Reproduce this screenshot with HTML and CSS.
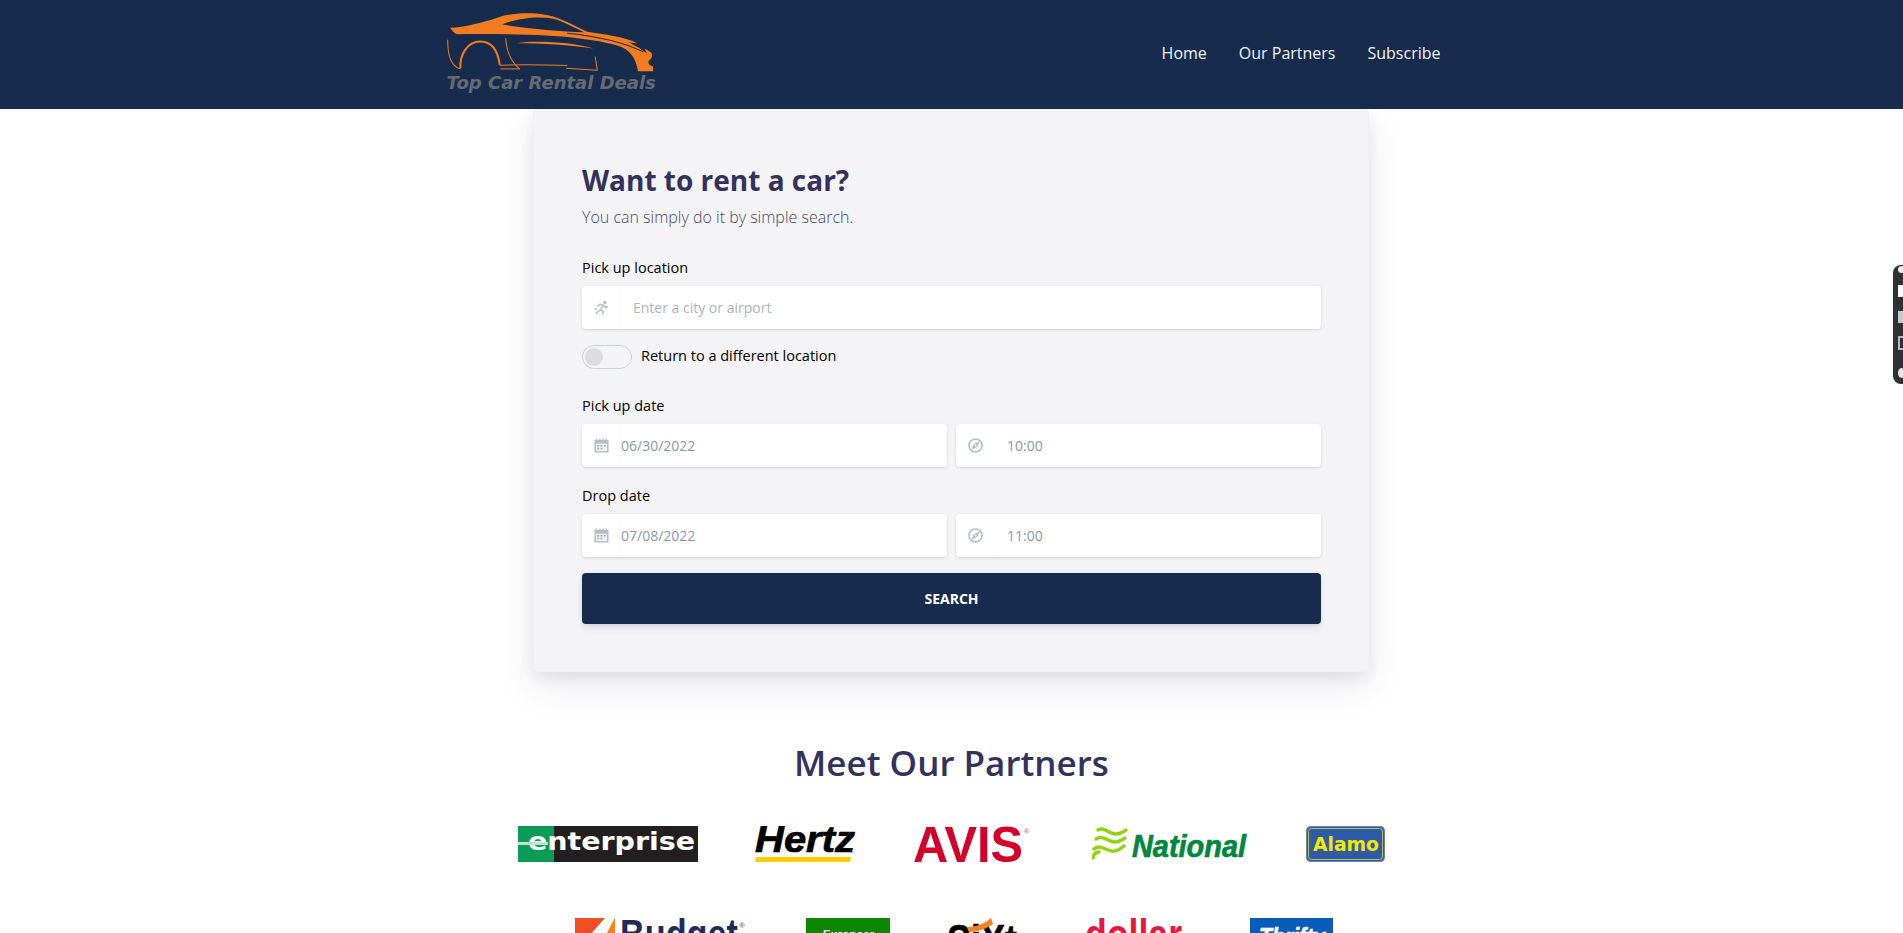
FILE: index.html
```html
<!DOCTYPE html>
<html>
<head>
  <title>Top Car Rental Deals</title>
  <link rel="stylesheet" href="styles.css">
</head>
<body>
  <div class="page">
    <header class="topbar">
      <div class="topbar-inner">
        <a class="brand" href="#">
          <svg class="brand-car" viewBox="80 40 620 176" aria-hidden="true">
            <path class="car-fill" fill-rule="evenodd" d="M90 84 C130 82 190 68 235 52 C285 36 370 36 420 58 C450 70 475 84 500 96 C550 104 610 110 650 130 L625 128 C650 140 665 150 678 160 L672 146 L692 158 C696 170 694 176 685 182 C680 188 685 196 697 200 L697 214 L652 214 C648 190 640 165 615 148 C590 132 530 122 470 115 C380 104 250 102 110 103 C100 100 94 92 90 84 Z M245 74 C280 58 360 44 410 60 C440 72 465 85 490 97 C420 95 320 86 245 74 Z"/>
            <path class="car-fill" d="M290 130 C340 122 450 125 518 146 C450 135 360 130 290 130 Z"/>
            <path class="car-slit" d="M440 100 C520 108 600 122 668 156"/>
            <path class="car-line" d="M120 206 C118 165 140 125 180 125 C215 125 232 150 238 195"/>
            <path class="car-thin" d="M82 120 C82 160 90 200 120 207"/>
            <path class="car-thin" d="M256 115 C258 150 270 185 298 208"/>
            <path class="car-thin" d="M238 196 C300 194 380 195 440 197"/>
            <path class="car-thin" d="M240 207 L298 207"/>
            <path class="car-thin" d="M437 205 L530 211 L524 170"/>
          </svg>
          <span class="brand-name">Top Car Rental Deals</span>
        </a>
        <nav class="main-nav">
          <a href="#">Home</a>
          <a href="#">Our Partners</a>
          <a href="#">Subscribe</a>
        </nav>
      </div>
    </header>

    <main>
      <section class="search-card">
        <h3 class="search-title">Want to rent a car?</h3>
        <p class="search-sub">You can simply do it by simple search.</p>

        <form>
          <label class="field-label">Pick up location</label>
          <div class="input-group">
            <span class="addon">
              <svg class="icon" viewBox="0 0 16 16"><circle class="ic-solid" cx="11.6" cy="2.6" r="1.8"/><path class="ic-line" d="M3.5 7 L6.5 4.5 L10 5.5 L6.8 10.5 L2 14.5 M6.8 10.5 L10 12.5 L9 15.5 M10 5.5 L12 8 L15 7 M0.5 9.5 L3 9.5"/></svg>
            </span>
            <input class="text-input wide" type="text" placeholder="Enter a city or airport">
          </div>

          <div class="toggle-row">
            <span class="toggle"><span class="toggle-knob"></span></span>
            <span class="toggle-text">Return to a different location</span>
          </div>

          <label class="field-label date-label">Pick up date</label>
          <div class="date-row">
            <div class="input-group">
              <span class="addon">
                <svg class="icon" viewBox="0 0 16 16"><use href="#cal"/></svg>
              </span>
              <input class="text-input" type="text" value="06/30/2022">
            </div>
            <div class="input-group">
              <span class="addon">
                <svg class="icon" viewBox="0 0 16 16"><use href="#compass"/></svg>
              </span>
              <input class="text-input wide" type="text" value="10:00">
            </div>
          </div>

          <label class="field-label drop-label">Drop date</label>
          <div class="date-row">
            <div class="input-group">
              <span class="addon">
                <svg class="icon" viewBox="0 0 16 16"><use href="#cal"/></svg>
              </span>
              <input class="text-input" type="text" value="07/08/2022">
            </div>
            <div class="input-group">
              <span class="addon">
                <svg class="icon" viewBox="0 0 16 16"><use href="#compass"/></svg>
              </span>
              <input class="text-input wide" type="text" value="11:00">
            </div>
          </div>

          <button class="search-btn" type="button">SEARCH</button>
        </form>
      </section>

      <section class="partners">
        <h2 class="partners-title">Meet Our Partners</h2>

        <div class="logo-row">
          <svg class="logo" width="180" height="36" viewBox="0 0 180 36">
            <rect width="180" height="36" fill="#231f20"/>
            <rect width="36" height="36" fill="#0a9c56"/>
            <text class="lg-wide" x="10" y="24" font-size="24" fill="#fff" textLength="167" lengthAdjust="spacingAndGlyphs">enterprise</text>
            <rect y="16" width="30" height="3" fill="#bfe3cd"/>
          </svg>
          <svg class="logo" width="101" height="36" viewBox="0 0 101 36">
            <text class="lg-bold-it heavy" x="0" y="26" font-size="36" fill="#000" stroke="#000" textLength="100" lengthAdjust="spacingAndGlyphs">Hertz</text>
            <polygon points="1,31 96,31 95,36 0,36" fill="#ffcc00"/>
            <text class="lg-bold" x="96" y="28" font-size="4" fill="#888">®</text>
          </svg>
          <svg class="logo" width="122" height="36" viewBox="0 0 122 36">
            <text class="lg-bold" x="0" y="36" font-size="50" fill="#d4002a" textLength="110" lengthAdjust="spacingAndGlyphs">AVIS</text>
            <text class="lg-bold" x="111" y="8" font-size="7" fill="#e0738a">®</text>
          </svg>
          <svg class="logo" width="157" height="36" viewBox="0 0 157 36">
            <path class="wave" d="M6 4 C12 0 18 9 24 8 C28 8 31 6 34 4"/>
            <path class="wave" d="M4 13 C11 8 17 17 23 16 C27 16 30 14 33 12"/>
            <path class="wave" d="M2 23 C9 17 16 27 22 25 C26 25 29 22 32 20"/>
            <path class="wave" d="M1 32 C2 27 5 26 7 26"/>
            <text class="lg-bold-it heavy" x="40" y="31" font-size="31" fill="#00873e" stroke="#00873e" textLength="114" lengthAdjust="spacingAndGlyphs">National</text>
          </svg>
          <svg class="logo" width="79" height="36" viewBox="0 0 79 36">
            <rect x="0.5" y="0.5" width="78" height="35" rx="4" fill="#2d5ba8" stroke="#5f86bb"/>
            <rect x="2.5" y="2.5" width="74" height="31" rx="3" fill="none" stroke="#b9c050"/>
            <text class="lg-wide" x="7" y="25" font-size="19" fill="#f5e800" textLength="66" lengthAdjust="spacingAndGlyphs">Alamo</text>
          </svg>
        </div>

        <div class="logo-row second">
          <svg class="logo" width="174" height="50" viewBox="0 0 174 50">
            <rect width="40" height="50" fill="#f04e23"/>
            <polygon points="40,0 30,0 0,34 0,50 14,50" fill="#fff"/>
            <polygon points="40,0 40,30 14,50" fill="#f58220"/>
            <text class="lg-bold" x="45" y="31" font-size="42" fill="#1f2a5e" textLength="118" lengthAdjust="spacingAndGlyphs">Budget</text>
            <text class="lg-bold" x="164" y="10" font-size="8" fill="#777">®</text>
          </svg>
          <svg class="logo" width="84" height="50" viewBox="0 0 84 50">
            <rect width="84" height="50" fill="#0c8500"/>
            <text class="lg-bold" x="17" y="20" font-size="11" fill="#fff" textLength="51">Europcar</text>
          </svg>
          <svg class="logo" width="81" height="50" viewBox="0 0 81 50">
            <text class="lg-bold heavy" x="0" y="38" font-size="44" fill="#000" stroke="#000" textLength="70" lengthAdjust="spacingAndGlyphs">SiXt</text>
            <path d="M20 9 C28 9 38 6 44 0 L46 6 C38 12 28 14 22 14 Z" fill="#f58220"/>
          </svg>
          <svg class="logo" width="108" height="50" viewBox="0 0 108 50">
            <text class="lg-bold" x="0" y="32" font-size="44" fill="#e8173f" textLength="97" lengthAdjust="spacingAndGlyphs">dollar</text>
          </svg>
          <svg class="logo" width="83" height="50" viewBox="0 0 83 50">
            <rect width="83" height="50" fill="#0a5cbb"/>
            <text class="lg-bold-it heavy" x="9" y="28" font-size="26" fill="#fff" stroke="#fff" textLength="66" lengthAdjust="spacingAndGlyphs">Thrifty</text>
          </svg>
        </div>
      </section>
    </main>

    <aside class="side-widget">
      <span class="sw-dot"></span>
      <span class="sw-box white"></span>
      <span class="sw-box grey"></span>
      <span class="sw-box outline"></span>
      <span class="sw-dot low"></span>
    </aside>
  </div>

  <svg class="defs" width="0" height="0">
    <symbol id="cal" viewBox="0 0 16 16">
      <rect x="0.5" y="2" width="15" height="13.5" fill="#b4bcc6"/>
      <path d="M3 0.5 v3 M6.3 0.5 v3 M9.7 0.5 v3 M13 0.5 v3" stroke="#b4bcc6" stroke-width="1.2"/>
      <rect x="2" y="6" width="12" height="8" fill="#eef0f3"/>
      <path d="M3.5 7.5 h2 v1.5 h-2 z M7 7.5 h2 v1.5 h-2 z M10.5 7.5 h2 v1.5 h-2 z M3.5 10.5 h2 v1.5 h-2 z M7 10.5 h2 v1.5 h-2 z" fill="#a3acb8"/>
    </symbol>
    <symbol id="compass" viewBox="0 0 16 16">
      <circle cx="8" cy="8" r="7" fill="none" stroke="#b4bcc6" stroke-width="1.6"/>
      <polygon points="12.5,3.5 9.6,9.6 3.5,12.5 6.4,6.4" fill="#b4bcc6"/>
      <circle cx="8" cy="8" r="1" fill="#fff"/>
    </symbol>
  </svg>
</body>
</html>
```

FILE: styles.css
```css
* {
  box-sizing: border-box;
}
body {
  margin: 0;
  font-family: "Open Sans", sans-serif;
  background-color: #fff;
  color: #000;
}
.page {
  position: relative;
  height: 100vh;
  overflow: hidden;
}
.defs {
  position: absolute;
}

/* header */
.topbar {
  position: relative;
  z-index: 2;
  height: 109px;
  background-color: #172b4d;
}
.topbar-inner {
  width: 1010px;
  height: 100%;
  margin: 0 auto;
  display: flex;
  align-items: center;
  justify-content: space-between;
}
.brand {
  display: block;
  text-decoration: none;
  padding-bottom: 3px;
}
.brand-car {
  display: block;
  width: 207px;
  height: 59px;
}
.car-fill {
  fill: #f47c20;
}
.car-slit {
  fill: none;
  stroke: #172b4d;
  stroke-width: 3;
}
.car-line,
.car-thin {
  fill: none;
  stroke: #f47c20;
}
.car-line {
  stroke-width: 6;
}
.car-thin {
  stroke-width: 3;
}
.brand-name {
  display: block;
  margin-top: 1px;
  font-family: "DejaVu Sans", sans-serif;
  font-size: 18px;
  line-height: 20px;
  font-weight: bold;
  font-style: italic;
  white-space: nowrap;
  color: #666b73;
}
.main-nav {
  display: flex;
  margin-bottom: 3px;
}
.main-nav a {
  padding: 0 16px;
  font-size: 16px;
  color: #f1f3f6;
  text-decoration: none;
}

/* search card */
.search-card {
  position: relative;
  width: 836px;
  margin-left: calc(50% - 418.5px);
  padding: 49px 47px 47px 48px;
  border: 1px solid #f0f0f3;
  border-radius: 4px;
  background-color: #f4f4f7;
  box-shadow: 0 15px 35px rgba(50, 50, 93, 0.1), 0 5px 15px rgba(0, 0, 0, 0.07);
}
.search-title {
  margin: 0;
  font-size: 28px;
  line-height: 42px;
  font-weight: 700;
  color: #32325d;
}
.search-sub {
  margin: 3px 0 0;
  font-size: 16px;
  line-height: 26px;
  font-weight: 300;
  color: #444b5e;
}
.field-label {
  display: block;
  margin-top: 27px;
  margin-bottom: 8px;
  font-size: 14.5px;
  line-height: 21px;
  font-weight: 500;
}
.date-label {
  margin-top: 26px;
}
.drop-label {
  margin-top: 18px;
}
.input-group {
  display: flex;
  flex: 1;
  height: 43px;
  border-radius: 4px;
  background-color: #fff;
  box-shadow: 0 1px 3px rgba(50, 50, 93, 0.15), 0 1px 0 rgba(0, 0, 0, 0.02);
}
.addon {
  flex: none;
  width: 38px;
  display: flex;
  align-items: center;
  padding-left: 12px;
}
.icon {
  width: 15px;
  height: 15px;
  display: block;
}
.ic-solid {
  fill: #b4bcc6;
}
.ic-line {
  fill: none;
  stroke: #b4bcc6;
  stroke-width: 1.6;
}
.text-input {
  flex: 1;
  min-width: 0;
  padding: 0;
  border: none;
  border-left: 1px solid #fdfdfd;
  border-radius: 0 4px 4px 0;
  outline: none;
  background: transparent;
  font-family: "Open Sans", sans-serif;
  font-size: 14px;
  color: #8898aa;
}
.text-input.wide {
  padding-left: 12px;
}
.text-input::placeholder {
  color: #adb5bd;
  opacity: 1;
}
.toggle-row {
  display: flex;
  align-items: center;
  gap: 9px;
  margin-top: 16px;
}
.toggle {
  display: block;
  flex: none;
  width: 50px;
  height: 24px;
  padding: 2px;
  border: 1px solid #cad1d7;
  border-radius: 12px;
}
.toggle-knob {
  display: block;
  width: 18px;
  height: 18px;
  border-radius: 50%;
  background-color: #ddd;
}
.toggle-text {
  margin-bottom: 3px;
  font-size: 14.5px;
  line-height: 21px;
  font-weight: 500;
}
.date-row {
  display: flex;
  gap: 9px;
}
.search-btn {
  display: block;
  width: 100%;
  height: 51px;
  margin-top: 16px;
  border: none;
  border-radius: 4px;
  background-color: #172b4d;
  box-shadow: 0 4px 6px rgba(50, 50, 93, 0.11), 0 1px 3px rgba(0, 0, 0, 0.08);
  font-family: "Open Sans", sans-serif;
  font-size: 14px;
  font-weight: 700;
  color: #fff;
}

/* partners */
.partners {
  margin-top: 63px;
}
.partners-title {
  margin: 0;
  font-size: 35px;
  line-height: 56px;
  font-weight: 600;
  text-align: center;
  color: #32325d;
}
.logo-row {
  display: flex;
  justify-content: center;
  align-items: flex-start;
  gap: 57px;
  margin-top: 35px;
}
.logo-row.second {
  margin-top: 56px;
  padding-left: 5px;
}
.logo {
  display: block;
  flex: none;
}
.lg-bold {
  font-family: "Liberation Sans", sans-serif;
  font-weight: bold;
}
.lg-wide {
  font-family: "DejaVu Sans", sans-serif;
  font-weight: bold;
}
.lg-bold-it {
  font-family: "Liberation Sans", sans-serif;
  font-weight: bold;
  font-style: italic;
}
.heavy {
  stroke-width: 0.7;
}
.wave {
  fill: none;
  stroke: #8ed414;
  stroke-width: 3.4;
  stroke-linecap: round;
}

/* floating widget at the window edge */
.side-widget {
  position: absolute;
  top: 265px;
  right: 0;
  width: 10px;
  height: 119px;
  border-radius: 8px 0 0 8px;
  background-color: #2e3135;
  overflow: hidden;
}
.sw-dot,
.sw-box {
  display: block;
  position: absolute;
  left: 5px;
}
.sw-dot {
  top: 1px;
  width: 7px;
  height: 7px;
  border-radius: 50%;
  background-color: #e8e8e8;
}
.sw-dot.low {
  top: 103px;
  height: 10px;
}
.sw-box {
  width: 8px;
  height: 12px;
}
.sw-box.white {
  top: 20px;
  background-color: #fff;
}
.sw-box.grey {
  top: 46px;
  background-color: #c9c9c9;
}
.sw-box.outline {
  top: 71px;
  height: 14px;
  border: 2px solid #b9b9b9;
}
```
